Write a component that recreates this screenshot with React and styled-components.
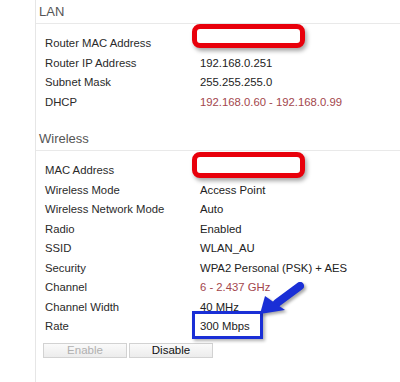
import React from 'react';
import styled, { createGlobalStyle } from 'styled-components';

const GlobalStyle = createGlobalStyle`
  html, body {
    margin: 0;
    padding: 0;
    background: #fff;
  }
  body {
    font-family: "Liberation Sans", Arial, sans-serif;
  }
`;

const Page = styled.div`
  position: relative;
  width: 400px;
  height: 382px;
  overflow: hidden;
`;

const Panel = styled.div`
  margin-left: 35px;
  height: 382px;
  border-left: 1px solid #e6e6e6;
`;

const Section = styled.section`
  margin-bottom: ${p => p.gap || 0}px;
`;

const SectionTitle = styled.div`
  height: 23px;
  line-height: 23px;
  padding-left: 3px;
  font-size: 13px;
  color: #555;
  border-bottom: 1px solid #e9e9e9;
`;

const Rows = styled.div`
  padding-top: 10px;
`;

const Row = styled.div`
  display: grid;
  grid-template-columns: 155px 1fr;
  height: 19.5px;
  line-height: 19.5px;
  padding-left: 9px;
  font-size: 11.3px;
`;

const Label = styled.div`
  color: #2a2a2a;
  white-space: nowrap;
`;

const Value = styled.div`
  position: relative;
  color: ${p => (p.accent ? '#a3464c' : '#222')};
  white-space: nowrap;
`;

const Redaction = styled.div`
  position: absolute;
  left: -8px;
  top: ${p => p.top}px;
  width: 103px;
  height: ${p => p.h}px;
  background: #fff;
  border: 5px solid #e8000b;
  border-radius: 8px;
  box-shadow: 2px 3px 4px rgba(0, 0, 0, 0.35);
`;

const Highlight = styled.div`
  position: absolute;
  left: -8px;
  top: -6px;
  width: 65px;
  height: 22px;
  border: 3px solid #1a2fd6;
  box-shadow: 2px 2px 3px rgba(0, 0, 0, 0.3);
`;

const ButtonBar = styled.div`
  display: flex;
  gap: 2px;
  padding: 6px 0 0 7px;
`;

const Button = styled.button`
  width: 84px;
  height: 15px;
  padding: 0;
  font-family: inherit;
  font-size: 11.5px;
  line-height: 13px;
  color: ${p => (p.disabled ? '#b0b0b0' : '#111')};
  background: linear-gradient(#fafafa, #ececec);
  border: 1px solid #d2d2d2;
  border-radius: 0;
`;

const Arrow = styled.svg`
  position: absolute;
  left: 250px;
  top: 276px;
  filter: drop-shadow(2px 2px 1.5px rgba(0, 0, 0, 0.35));
`;

const lan = [
  { label: 'Router MAC Address', redacted: { top: -10, h: 14 } },
  { label: 'Router IP Address', value: '192.168.0.251' },
  { label: 'Subnet Mask', value: '255.255.255.0' },
  { label: 'DHCP', value: '192.168.0.60 - 192.168.0.99', accent: true },
];

const wireless = [
  { label: 'MAC Address', redacted: { top: -9, h: 16 } },
  { label: 'Wireless Mode', value: 'Access Point' },
  { label: 'Wireless Network Mode', value: 'Auto' },
  { label: 'Radio', value: 'Enabled' },
  { label: 'SSID', value: 'WLAN_AU' },
  { label: 'Security', value: 'WPA2 Personal (PSK) + AES' },
  { label: 'Channel', value: '6 - 2.437 GHz', accent: true },
  { label: 'Channel Width', value: '40 MHz' },
  { label: 'Rate', value: '300 Mbps', highlight: true },
];

const InfoRow = ({ label, value, accent, redacted, highlight }) => (
  <Row>
    <Label>{label}</Label>
    <Value accent={accent}>
      {redacted && <Redaction top={redacted.top} h={redacted.h} />}
      {value}
      {highlight && <Highlight />}
    </Value>
  </Row>
);

const App = () => (
  <Page>
    <GlobalStyle />
    <Panel>
      <Section gap={15}>
        <SectionTitle>LAN</SectionTitle>
        <Rows>
          {lan.map(r => <InfoRow key={r.label} {...r} />)}
        </Rows>
      </Section>
      <Section>
        <SectionTitle>Wireless</SectionTitle>
        <Rows>
          {wireless.map(r => <InfoRow key={r.label} {...r} />)}
        </Rows>
        <ButtonBar>
          <Button disabled>Enable</Button>
          <Button>Disable</Button>
        </ButtonBar>
      </Section>
    </Panel>
    <Arrow width="64" height="46" viewBox="0 0 64 46">
      <line x1="50" y1="10" x2="27" y2="27" stroke="#1a2fd6" strokeWidth="8" strokeLinecap="round" />
      <polygon points="15,20 10,38 35,34" fill="#1a2fd6" />
    </Arrow>
  </Page>
);

export default App;
